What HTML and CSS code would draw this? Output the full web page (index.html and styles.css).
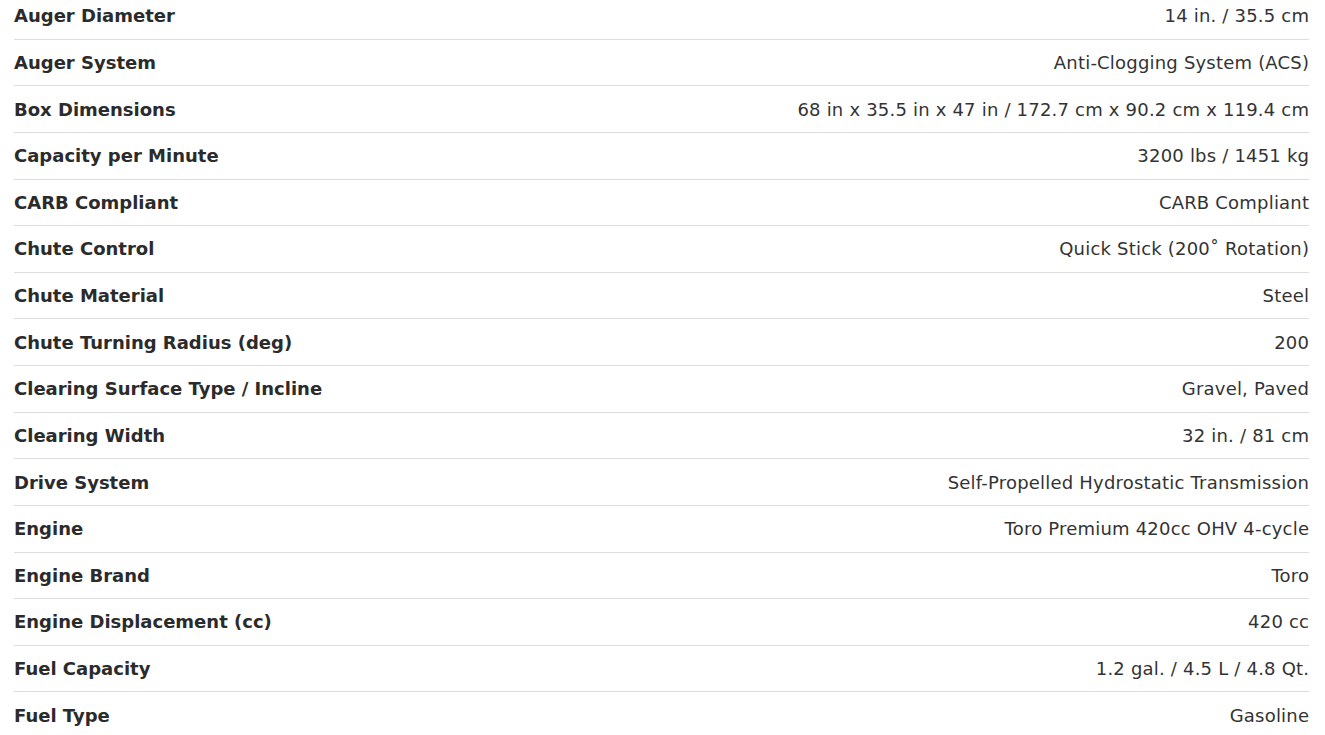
FILE: index.html
```html
<!DOCTYPE html>
<html>
<head>
<meta charset="utf-8">
<link rel="stylesheet" href="styles.css">
</head>
<body>
<div class="specs">
  <div class="row"><span class="label">Auger Diameter</span><span class="value">14 in. / 35.5 cm</span></div>
  <div class="row"><span class="label">Auger System</span><span class="value">Anti-Clogging System (ACS)</span></div>
  <div class="row"><span class="label">Box Dimensions</span><span class="value">68 in x 35.5 in x 47 in / 172.7 cm x 90.2 cm x 119.4 cm</span></div>
  <div class="row"><span class="label">Capacity per Minute</span><span class="value">3200 lbs / 1451 kg</span></div>
  <div class="row"><span class="label">CARB Compliant</span><span class="value">CARB Compliant</span></div>
  <div class="row"><span class="label">Chute Control</span><span class="value">Quick Stick (200˚ Rotation)</span></div>
  <div class="row"><span class="label">Chute Material</span><span class="value">Steel</span></div>
  <div class="row"><span class="label">Chute Turning Radius (deg)</span><span class="value">200</span></div>
  <div class="row"><span class="label">Clearing Surface Type / Incline</span><span class="value">Gravel, Paved</span></div>
  <div class="row"><span class="label">Clearing Width</span><span class="value">32 in. / 81 cm</span></div>
  <div class="row"><span class="label">Drive System</span><span class="value">Self-Propelled Hydrostatic Transmission</span></div>
  <div class="row"><span class="label">Engine</span><span class="value">Toro Premium 420cc OHV 4-cycle</span></div>
  <div class="row"><span class="label">Engine Brand</span><span class="value">Toro</span></div>
  <div class="row"><span class="label">Engine Displacement (cc)</span><span class="value">420 cc</span></div>
  <div class="row"><span class="label">Fuel Capacity</span><span class="value">1.2 gal. / 4.5 L / 4.8 Qt.</span></div>
  <div class="row"><span class="label">Fuel Type</span><span class="value">Gasoline</span></div>
</div>
</body>
</html>
```
FILE: styles.css
```css
html, body {
  margin: 0;
  padding: 0;
  background: #fff;
}
body {
  font-family: "DejaVu Sans", Verdana, sans-serif;
  font-size: 18px;
  color: #333;
  overflow: hidden;
}
.specs {
  margin: -7px 16px 0 14px;
}
.row {
  display: flex;
  justify-content: space-between;
  align-items: center;
  height: 45.64px;
  border-bottom: 1px solid #ddd;
}
.label {
  font-weight: bold;
  color: #2b2b2b;
}
.value {
  text-align: right;
  letter-spacing: 0.2px;
  margin-right: -0.2px;
}
```
